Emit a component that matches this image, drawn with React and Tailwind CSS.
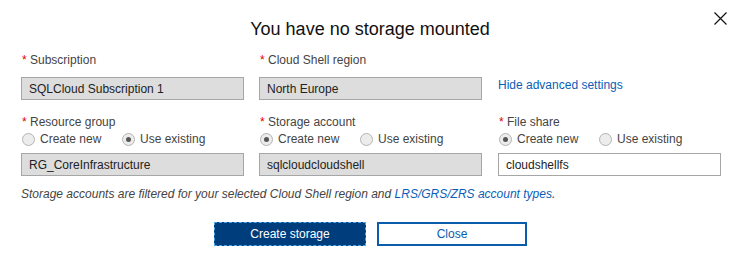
import React from "react";

function Radio({ checked }) {
  return (
    <span className="flex h-[13px] w-[13px] shrink-0 items-center justify-center rounded-full border border-[#b4b4b4] bg-[#ececec]">
      {checked ? <span className="h-[5px] w-[5px] rounded-full bg-[#555]" /> : null}
    </span>
  );
}

function Option({ checked, label, first }) {
  return (
    <div className={"flex items-center gap-[5px] " + (first ? "w-[101px] pl-[1px]" : "")}>
      <Radio checked={checked} />
      <span className="text-[12px] leading-[14px] text-[#444]">{label}</span>
    </div>
  );
}

function Label({ children }) {
  return (
    <div className="h-[14px] text-[12px] leading-[14px] text-[#444]">
      <span className="pl-[1px] text-[#e60000]">*</span> {children}
    </div>
  );
}

function Field({ value, disabled }) {
  return (
    <div
      className={
        "flex h-[23px] w-[223px] items-center border px-[7px] text-[12px] text-[#222] " +
        (disabled ? "border-[#a6a6a6] bg-[#dddddd]" : "border-[#a6a6a6] bg-white")
      }
    >
      {value}
    </div>
  );
}

export default function App() {
  return (
    <div
      className="relative h-[263px] w-[740px] overflow-hidden bg-white"
      style={{ fontFamily: '"Liberation Sans", Arial, sans-serif' }}
    >
      <button className="absolute left-[714px] top-[12px] h-[13px] w-[13px]" aria-label="Close">
        <svg width="13" height="13" viewBox="0 0 13 13">
          <path d="M0.5 0.5 L12.5 12.5 M12.5 0.5 L0.5 12.5" stroke="#111" strokeWidth="1.2" fill="none" />
        </svg>
      </button>

      <div className="pt-[19px] text-center text-[18px] leading-[21px] text-[#111]">
        You have no storage mounted
      </div>

      <div className="mt-[13px] grid grid-cols-[223px_224px_223px] gap-x-[15px] px-[21px]">
        <div className="flex flex-col">
          <Label>Subscription</Label>
          <div className="mt-[10px]">
            <Field value="SQLCloud Subscription 1" disabled />
          </div>
        </div>
        <div className="flex flex-col">
          <Label>Cloud Shell region</Label>
          <div className="mt-[10px]">
            <Field value="North Europe" disabled />
          </div>
        </div>
        <div className="flex flex-col">
          <div className="mt-[25px] text-[12px] leading-[14px] text-[#0a5eb8]">Hide advanced settings</div>
        </div>

        <div className="mt-[15px] flex flex-col">
          <Label>Resource group</Label>
          <div className="mt-[2px] flex h-[16px] items-center">
            <Option first label="Create new" />
            <Option checked label="Use existing" />
          </div>
          <div className="mt-[6px]">
            <Field value="RG_CoreInfrastructure" disabled />
          </div>
        </div>
        <div className="mt-[15px] flex flex-col">
          <Label>Storage account</Label>
          <div className="mt-[2px] flex h-[16px] items-center">
            <Option first checked label="Create new" />
            <Option label="Use existing" />
          </div>
          <div className="mt-[6px]">
            <Field value="sqlcloudcloudshell" disabled />
          </div>
        </div>
        <div className="mt-[15px] flex flex-col">
          <Label>File share</Label>
          <div className="mt-[2px] flex h-[16px] items-center">
            <Option first checked label="Create new" />
            <Option label="Use existing" />
          </div>
          <div className="mt-[6px]">
            <Field value="cloudshellfs" />
          </div>
        </div>
      </div>

      <div className="mt-[11px] px-[21px] text-[12px] italic leading-[14px] text-[#444]">
        Storage accounts are filtered for your selected Cloud Shell region and{" "}
        <span className="text-[#0a5eb8]">LRS/GRS/ZRS account types</span>.
      </div>

      <div className="mt-[21px] flex justify-center gap-[11px] pl-[1px]">
        <button className="flex h-[24px] w-[152px] items-center justify-center border border-dashed border-[#4aa8e6] bg-[#003d7c] text-[12px] text-white">
          Create storage
        </button>
        <button className="flex h-[24px] w-[150px] items-center justify-center border-2 border-[#0b5cad] bg-white text-[12px] text-[#0b5cad]">
          Close
        </button>
      </div>
    </div>
  );
}
